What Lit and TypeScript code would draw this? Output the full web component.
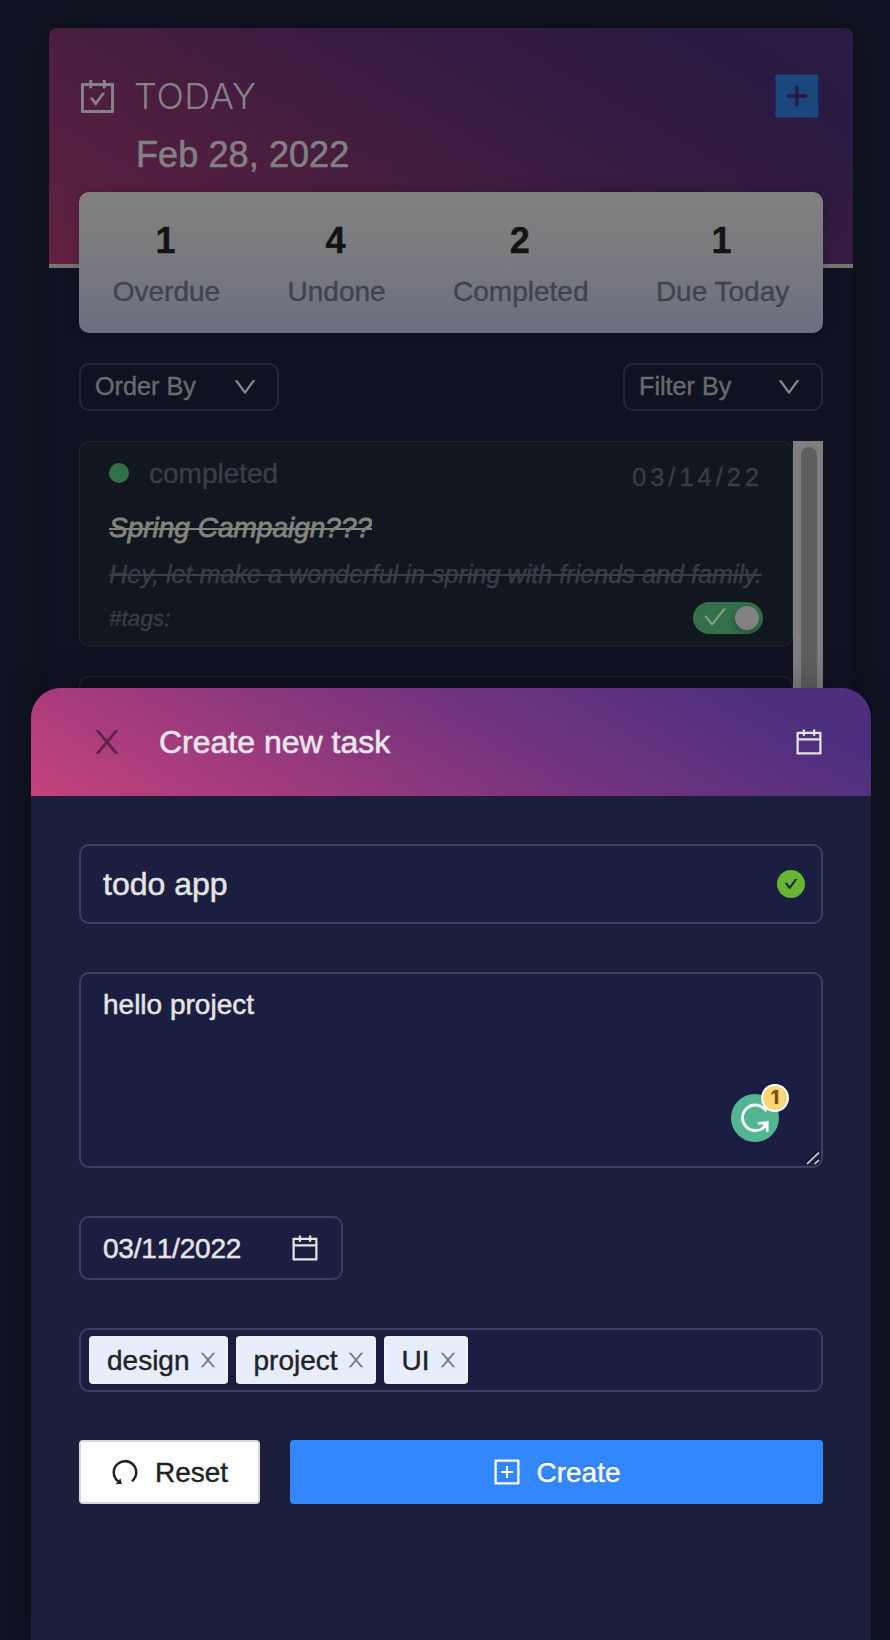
import { LitElement, html, css, svg } from "lit";
import { customElement, property } from "lit/decorators.js";

const CAL_FRAME =
  "M880 184H712v-64c0-4.4-3.6-8-8-8h-56c-4.4 0-8 3.6-8 8v64H384v-64c0-4.4-3.6-8-8-8h-56c-4.4 0-8 3.6-8 8v64H144c-17.7 0-32 14.3-32 32v664c0 17.7 14.3 32 32 32h736c17.7 0 32-14.3 32-32V216c0-17.7-14.3-32-32-32z";
const SQUARE_FRAME =
  "M880 112H144c-17.7 0-32 14.3-32 32v736c0 17.7 14.3 32 32 32h736c17.7 0 32-14.3 32-32V144c0-17.7-14.3-32-32-32z";

const ICONS: Record<string, string> = {
  carryOut:
    CAL_FRAME +
    "m-40 656H184V256h128v48c0 4.4 3.6 8 8 8h56c4.4 0 8-3.6 8-8v-48h256v48c0 4.4 3.6 8 8 8h56c4.4 0 8-3.6 8-8v-48h128v584zM688 420h-55.2c-5.1 0-10 2.5-13 6.6L468.9 634.4l-64.7-89c-3-4.1-7.8-6.6-13-6.6H336c-6.5 0-10.3 7.4-6.5 12.7l126.6 174.1a16.1 16.1 0 0026 0l212.6-292.7c3.8-5.4 0-12.9-6.7-12.9z",
  calendar:
    CAL_FRAME +
    "m-40 656H184V460h656v380zM184 392V256h128v48c0 4.4 3.6 8 8 8h56c4.4 0 8-3.6 8-8v-48h256v48c0 4.4 3.6 8 8 8h56c4.4 0 8-3.6 8-8v-48h128v136H184z",
  plusFilled:
    SQUARE_FRAME +
    "M704 536c0 4.4-3.6 8-8 8H544v152c0 4.4-3.6 8-8 8h-48c-4.4 0-8-3.6-8-8V544H328c-4.4 0-8-3.6-8-8v-48c0-4.4 3.6-8 8-8h152V328c0-4.4 3.6-8 8-8h48c4.4 0 8 3.6 8 8v152h152c4.4 0 8 3.6 8 8v48z",
  plusOutlined:
    SQUARE_FRAME +
    "m-40 728H184V184h656v656zM328 544h152v152c0 4.4 3.6 8 8 8h48c4.4 0 8-3.6 8-8V544h152c4.4 0 8-3.6 8-8v-48c0-4.4-3.6-8-8-8H544V328c0-4.4-3.6-8-8-8h-48c-4.4 0-8 3.6-8 8v152H328c-4.4 0-8 3.6-8 8v48c0 4.4 3.6 8 8 8z",
  down: "M884 256h-75c-5.1 0-9.9 2.5-12.9 6.6L512 654.2 227.9 262.6c-3-4.1-7.8-6.6-12.9-6.6h-75c-6.5 0-10.3 7.4-6.5 12.7l352.6 486.1c12.8 17.6 39 17.6 51.7 0l352.6-486.1c3.9-5.3.1-12.7-6.4-12.7z",
  check:
    "M912 190h-69.9c-9.8 0-19.1 4.5-25.1 12.2L404.7 724.5 207 474a32 32 0 00-25.1-12.2H112c-6.7 0-10.4 7.7-6.3 12.9l273.9 347c12.8 16.2 37.4 16.2 50.3 0l488.4-618.9c4.1-5.1.4-12.8-6.3-12.8z",
  checkCircle:
    "M512 64C264.6 64 64 264.6 64 512s200.6 448 448 448 448-200.6 448-448S759.4 64 512 64zm193.5 301.7l-210.6 292a31.8 31.8 0 01-51.7 0L318.5 484.9c-3.8-5.3 0-12.7 6.5-12.7h46.9c10.2 0 19.9 4.9 25.9 13.3l71.2 98.8 157.2-218c6-8.3 15.6-13.3 25.9-13.3H699c6.5 0 10.3 7.4 6.5 12.7z",
  close:
    "M563.8 512l262.5-312.9c4.4-5.2.7-13.1-6.1-13.1h-79.8c-4.7 0-9.2 2.1-12.3 5.7L511.6 449.8 295.1 191.7c-3-3.6-7.5-5.7-12.3-5.7H203c-6.8 0-10.5 7.9-6.1 13.1L459.4 512 196.9 824.9A7.95 7.95 0 00203 838h79.8c4.7 0 9.2-2.1 12.3-5.7l216.5-258.1 216.5 258.1c3 3.6 7.5 5.7 12.3 5.7h79.8c6.8 0 10.5-7.9 6.1-13.1L563.8 512z",
  undo: "M511.4 124C290.5 124.3 112 303 112 523.9c0 128 60.2 242 153.8 315.2l-37.5 48c-4.1 5.3-.3 13 6.3 12.9l167-.8c5.2 0 9-4.9 7.7-9.9L369.8 727a8 8 0 00-14.1-3L315 776.1c-10.2-8-20-16.7-29.3-26a318.64 318.64 0 01-68.6-101.7C200.4 609 192 567.1 192 523.9s8.4-85.1 25.1-124.5c16.1-38.1 39.2-72.3 68.6-101.7 29.4-29.4 63.6-52.5 101.7-68.6C426.9 212.4 468.8 204 512 204s85.1 8.4 124.5 25.1c38.1 16.1 72.3 39.2 101.7 68.6 29.4 29.4 52.5 63.6 68.6 101.7 16.7 39.4 25.1 81.3 25.1 124.5s-8.4 85.1-25.1 124.5a318.64 318.64 0 01-68.6 101.7c-7.5 7.5-15.3 14.5-23.4 21.2a7.93 7.93 0 00-1.2 11.1l39.4 50.5c2.8 3.5 7.9 4.1 11.4 1.3C854.5 760.8 912 649.1 912 523.9c0-221.1-179.4-400.2-400.6-399.9z",
};

@customElement("ui-icon")
class UiIcon extends LitElement {
  static styles = css`
    :host {
      display: block;
      flex: none;
      width: 28px;
      height: 28px;
    }
    .glyph {
      display: block;
      width: 100%;
      height: 100%;
      fill: currentColor;
    }
  `;
  @property() name = "";
  render() {
    return html`<svg class="glyph" viewBox="64 64 896 896">${svg`<path d=${ICONS[this.name] ?? ""}></path>`}</svg>`;
  }
}

@customElement("today-panel")
class TodayPanel extends LitElement {
  static styles = css`
    :host {
      display: block;
      height: 1700px;
      border-radius: 8px;
      background: #101222;
      box-shadow: 0 0 40px rgba(0, 0, 0, 0.22);
    }
    .head {
      box-sizing: border-box;
      height: 240px;
      padding: 39px 32px 0 30px;
      border-bottom: 4px solid #757575;
      border-radius: 8px 8px 0 0;
      background: linear-gradient(30deg, #62213f 0%, #541f40 20%, #451d3f 40%, #381b41 58%, #281a41 88%, #291b43 100%) border-box;
    }
    .row {
      display: flex;
      align-items: center;
      height: 58px;
      color: #868286;
    }
    .lead {
      width: 37px;
      height: 37px;
    }
    .today {
      flex: 1;
      margin-left: 18px;
      font-family: Inter, "Liberation Sans", sans-serif;
      font-weight: 300;
      font-size: 36px;
      letter-spacing: 0.6px;
      line-height: 58px;
    }
    .add {
      width: 48px;
      height: 48px;
      color: #1c477d;
    }
    .date {
      padding-left: 57px;
      font-size: 36px;
      letter-spacing: 0.1px;
      line-height: 59px;
      color: #838083;
      -webkit-text-stroke: 0.6px #838083;
    }
    .body {
      padding: 0 30px;
    }
    .stats {
      display: flex;
      justify-content: space-around;
      box-sizing: border-box;
      height: 141px;
      margin-top: -76px;
      padding-top: 25px;
      border-radius: 10px;
      background: linear-gradient(#808080 0%, #7c7c7f 35%, #6c6e80 100%);
      box-shadow: 0 0 14px rgba(0, 0, 0, 0.18);
      position: relative;
      text-align: center;
    }
    .num {
      padding-right: 2px;
      font-size: 36px;
      line-height: 48px;
      font-weight: 700;
      color: #131313;
      -webkit-text-stroke: 0.4px #131313;
    }
    .cap {
      margin-top: 5px;
      font-size: 28px;
      line-height: 44px;
      color: #41434e;
      -webkit-text-stroke: 0.4px #41434e;
    }
    .filters {
      display: flex;
      justify-content: space-between;
      margin-top: 30px;
    }
    .select {
      display: flex;
      align-items: center;
      justify-content: space-between;
      box-sizing: border-box;
      width: 200px;
      height: 48px;
      padding: 0 20px 2px 14px;
      border: 2px solid #242635;
      border-radius: 10px;
      font-size: 25.2px;
      color: #6a6a6c;
      -webkit-text-stroke: 0.4px #6a6a6c;
    }
    .select ui-icon {
      width: 24px;
      height: 24px;
      margin-top: 2px;
      color: #8a8a8e;
    }
    .list {
      display: flex;
      margin-top: 30px;
    }
    .tasks {
      flex: 1;
      display: flex;
      flex-direction: column;
      gap: 30px;
      min-width: 0;
    }
    .task {
      box-sizing: border-box;
      height: 205px;
      padding: 9px 29px 0;
      border: 1px solid #22252e;
      border-radius: 10px;
      background: #12171f;
      color: #3a3c48;
    }
    .task.plain {
      background: #101222;
    }
    .status {
      display: flex;
      align-items: center;
      height: 44px;
    }
    .dot {
      width: 20px;
      height: 20px;
      border-radius: 50%;
      background: #317049;
    }
    .state {
      flex: 1;
      margin: 2px 0 0 20px;
      font-size: 28px;
      line-height: 44px;
      -webkit-text-stroke: 0.4px #3a3c48;
    }
    .due {
      margin-top: 8px;
      font-size: 25.2px;
      letter-spacing: 4.1px;
      -webkit-text-stroke: 0.4px #3a3c48;
    }
    .title {
      width: fit-content;
      overflow: hidden;
      margin-top: 11px;
      font-size: 28px;
      line-height: 44px;
      font-style: italic;
      color: #83837f;
      text-decoration: line-through;
      text-decoration-thickness: 2px;
      -webkit-text-stroke: 0.8px #83837f;
    }
    .desc {
      margin-top: 4px;
      font-size: 25.2px;
      line-height: 40px;
      white-space: nowrap;
      font-style: italic;
      text-decoration: line-through;
      text-decoration-thickness: 2px;
      -webkit-text-stroke: 0.4px #3a3c48;
    }
    .foot {
      display: flex;
      justify-content: space-between;
      align-items: center;
      height: 32px;
      margin-top: 8px;
      font-size: 22.6px;
      font-style: italic;
      -webkit-text-stroke: 0.3px #3a3c48;
    }
    .hash {
      padding-top: 2px;
    }
    .toggle {
      display: flex;
      align-items: center;
      justify-content: space-between;
      box-sizing: border-box;
      width: 70px;
      height: 32px;
      padding: 0 4px 0 10px;
      border-radius: 16px;
      background: #317049;
      color: #8a9a90;
    }
    .toggle ui-icon {
      width: 24px;
      height: 24px;
      margin-bottom: 2px;
    }
    .knob {
      width: 24px;
      height: 24px;
      border-radius: 50%;
      background: #828282;
      box-shadow: 0 3px 6px rgba(0, 20, 10, 0.3);
    }
    .track {
      box-sizing: border-box;
      width: 30px;
      padding: 6px 6px 0 8px;
      background: #7f7f7f;
    }
    .thumb {
      width: 16px;
      height: 500px;
      border-radius: 8px;
      background: #5f5f5f;
    }
  `;

  stats = [
    ["1", "Overdue"],
    ["4", "Undone"],
    ["2", "Completed"],
    ["1", "Due Today"],
  ];

  render() {
    return html`
      <div class="head">
        <div class="row">
          <ui-icon class="lead" name="carryOut"></ui-icon>
          <div class="today">TODAY</div>
          <ui-icon class="add" name="plusFilled"></ui-icon>
        </div>
        <div class="date">Feb 28, 2022</div>
      </div>
      <div class="body">
        <div class="stats">
          ${this.stats.map(
            ([n, label]) => html`<div><div class="num">${n}</div><div class="cap">${label}</div></div>`
          )}
        </div>
        <div class="filters">
          ${["Order By", "Filter By"].map(
            (label) => html`<div class="select"><span>${label}</span><ui-icon name="down"></ui-icon></div>`
          )}
        </div>
        <div class="list">
          <div class="tasks">
            <div class="task">
              <div class="status">
                <span class="dot"></span>
                <span class="state">completed</span>
                <span class="due">03/14/22</span>
              </div>
              <div class="title">Spring Campaign???</div>
              <div class="desc">Hey, let make a wonderful in spring with friends and family.</div>
              <div class="foot">
                <span class="hash">#tags:</span>
                <span class="toggle"><ui-icon name="check"></ui-icon><span class="knob"></span></span>
              </div>
            </div>
            <div class="task plain"></div>
          </div>
          <div class="track"><div class="thumb"></div></div>
        </div>
      </div>
    `;
  }
}

@customElement("task-drawer")
class TaskDrawer extends LitElement {
  static styles = css`
    :host {
      display: block;
      border-radius: 30px 30px 0 0;
      background: #1c1f3c;
      color: #e5e4e4;
      font-size: 28px;
      box-shadow: 0 -8px 34px rgba(0, 0, 0, 0.2);
    }
    .bar {
      display: flex;
      align-items: center;
      box-sizing: border-box;
      height: 108px;
      padding: 0 48px 0 60px;
      border-radius: 30px 30px 0 0;
      background: linear-gradient(30deg, #c4427b 0%, #a83c7d 20%, #8a377d 40%, #70337f 58%, #4c2f7e 88%, #4f2f7f 100%);
    }
    .close {
      width: 32px;
      height: 32px;
      color: #5e2348;
    }
    .heading {
      flex: 1;
      margin-left: 36px;
      font-size: 32px;
      color: #e9e6ea;
      -webkit-text-stroke: 0.6px #e9e6ea;
    }
    .form {
      display: flex;
      flex-direction: column;
      gap: 48px;
      padding: 48px;
    }
    .field {
      display: flex;
      align-items: center;
      box-sizing: border-box;
      height: 64px;
      padding: 0 22px;
      border: 2px solid #3c3e5d;
      border-radius: 10px;
      background: #1b1e40;
      -webkit-text-stroke: 0.5px #e5e4e4;
    }
    .name {
      justify-content: space-between;
      height: 80px;
      padding-right: 16px;
      font-size: 32px;
    }
    .ok {
      color: #67b530;
    }
    .note {
      position: relative;
      align-items: flex-start;
      height: 196px;
      padding-top: 9px;
      line-height: 44px;
    }
    .when {
      justify-content: space-between;
      width: 264px;
    }
    .when span {
      padding-top: 2px;
      font-kerning: none;
      letter-spacing: -0.2px;
    }
    .tags {
      gap: 8px;
      padding: 0 8px;
    }
    .tag {
      display: flex;
      align-items: center;
      gap: 8px;
      box-sizing: border-box;
      height: 48px;
      padding: 0 8px 0 16px;
      border: 2px solid #f0f0f0;
      border-radius: 4px;
      background: #e7edfd;
      color: #222326;
      -webkit-text-stroke: 0.4px #222326;
    }
    .tag span,
    .btn span {
      padding-top: 2px;
    }
    .tag ui-icon {
      width: 20px;
      height: 20px;
      color: #777a82;
    }
    .actions {
      display: flex;
      gap: 30px;
    }
    .btn {
      display: flex;
      align-items: center;
      justify-content: center;
      gap: 16px;
      box-sizing: border-box;
      height: 64px;
      border-radius: 4px;
    }
    .reset {
      width: 181px;
      border: 2px solid #d9d9d9;
      background: #fff;
      color: #222;
      -webkit-text-stroke: 0.4px #222;
    }
    .create {
      flex: 1;
      gap: 15px;
      padding-left: 1px;
      background: #3287fc;
      color: #fff;
      text-shadow: 0 -2px 0 rgba(0, 0, 0, 0.12);
      -webkit-text-stroke: 0.4px #fff;
    }
    .assistant {
      position: absolute;
      right: 42px;
      bottom: 24px;
      width: 48px;
      height: 48px;
    }
    .assistant .mark {
      display: block;
      width: 48px;
      height: 48px;
    }
    .count {
      position: absolute;
      left: 30px;
      top: -10px;
      box-sizing: border-box;
      width: 28px;
      height: 28px;
      border: 2px solid #fff;
      border-radius: 50%;
      background: #fcd777;
      color: #7a4c12;
      font: 800 19px/24px Inter, sans-serif;
      text-align: center;
      -webkit-text-stroke: 0;
    }
    .grip {
      position: absolute;
      right: 1px;
      bottom: 1px;
      width: 14px;
      height: 14px;
    }
  `;

  render() {
    return html`
      <div class="bar">
        <ui-icon class="close" name="close"></ui-icon>
        <div class="heading">Create new task</div>
        <ui-icon name="calendar"></ui-icon>
      </div>
      <div class="form">
        <div class="field name"><span>todo app</span><ui-icon class="ok" name="checkCircle"></ui-icon></div>
        <div class="field note">
          <span>hello project</span>
          <div class="assistant">
            <svg class="mark" viewBox="0 0 48 48" fill="none" stroke="#fff" stroke-width="2.8" stroke-linecap="round">
              <circle cx="24" cy="24" r="24" fill="#52b693" stroke="none"></circle>
              <path d="M34.6 16.2A12.8 12.8 0 1 0 33.6 32.6"></path>
              <path d="M28 29.4L36.2 28.6V36.8M36.2 28.6L32 34"></path>
            </svg>
            <span class="count">1</span>
          </div>
          <svg class="grip" viewBox="0 0 14 14" fill="none">
            <path d="M0.5 13L12.5 1M8.5 13L13 8.5" stroke="#0b0d1c" stroke-width="4"></path>
            <path d="M1 13L13 1.5M8.5 13L13 9" stroke="#b9bac4" stroke-width="1.9"></path>
          </svg>
        </div>
        <div class="field when"><span>03/11/2022</span><ui-icon name="calendar"></ui-icon></div>
        <div class="field tags">
          ${["design", "project", "UI"].map(
            (t) => html`<span class="tag"><span>${t}</span><ui-icon name="close"></ui-icon></span>`
          )}
        </div>
        <div class="actions">
          <div class="btn reset"><ui-icon name="undo"></ui-icon><span>Reset</span></div>
          <div class="btn create"><ui-icon name="plusOutlined"></ui-icon><span>Create</span></div>
        </div>
      </div>
    `;
  }
}

@customElement("app-root")
class AppRoot extends LitElement {
  static styles = css`
    :host {
      display: block;
      position: relative;
      box-sizing: border-box;
      height: 1640px;
      padding: 28px 37px 0 49px;
      overflow: hidden;
      background: #101321;
      font-family: "Liberation Sans", Arial, sans-serif;
    }
    .drawer {
      position: absolute;
      left: 31px;
      right: 19px;
      top: 688px;
      bottom: 0;
    }
  `;
  render() {
    return html`<today-panel></today-panel><task-drawer class="drawer"></task-drawer>`;
  }
}
